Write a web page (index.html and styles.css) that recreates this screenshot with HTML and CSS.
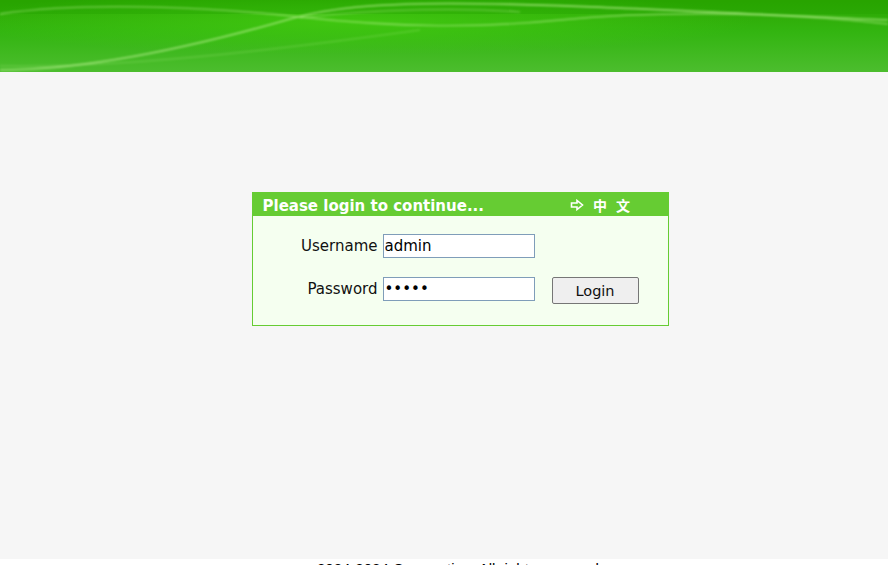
FILE: index.html
```html
<!DOCTYPE html>
<html lang="en">

<head>
    <meta charset="UTF-8">
    <meta name="viewport" content="width=device-width, initial-scale=1.0">
    <title>Login</title>
    <link rel="stylesheet" href="styles.css">
</head>

<body>
    <div class="banner">
        <svg class="waves" viewBox="0 0 888 72" preserveAspectRatio="none">
            <defs>
                <linearGradient id="sky" x1="0" y1="0" x2="0" y2="1">
                    <stop offset="0" stop-color="#2ba600" />
                    <stop offset="0.45" stop-color="#33b511" />
                    <stop offset="1" stop-color="#4cbd2e" />
                </linearGradient>
                <radialGradient id="glow" cx="0.4" cy="0.3" r="0.45">
                    <stop offset="0" stop-color="#44cc11" stop-opacity="0.8" />
                    <stop offset="1" stop-color="#44cc11" stop-opacity="0" />
                </radialGradient>
                <filter id="soft"><feGaussianBlur stdDeviation="0.8" /></filter>
            </defs>
            <rect width="888" height="72" fill="url(#sky)" />
            <rect width="888" height="72" fill="url(#glow)" />
            <rect x="0" y="0" width="888" height="14" fill="#22a000" opacity="0.35" />
            <g fill="none" stroke="#b8f090" filter="url(#soft)">
                <path d="M0 70 C 90 70, 200 45, 290 19 S 520 4, 888 20" stroke-width="1.6" opacity="0.7" />
                <path d="M0 14 C 80 2, 200 6, 300 17 S 480 28, 560 20 S 760 10, 888 24" stroke-width="1.4" opacity="0.55" />
                <path d="M300 18 C 380 8, 470 8, 520 12" stroke-width="1.2" opacity="0.5" />
                <path d="M0 66 C 120 68, 260 52, 420 30" stroke-width="1" opacity="0.35" />
            </g>
        </svg>
    </div>

    <div class="page">
        <div class="login-box">
            <div class="login-title">
                <span>Please login to continue...</span>
                <span class="lang">
                    <svg class="arrow" viewBox="0 0 14 12">
                        <path d="M1.5 4 H7 V1.5 L12.5 6 L7 10.5 V8 H1.5 Z" fill="none" stroke="#fff" stroke-width="1.6" stroke-linejoin="miter" />
                    </svg>
                    <span class="zh">中</span>
                    <span class="zh">文</span>
                </span>
            </div>
            <form class="login-form">
                <div class="row">
                    <label for="user">Username</label>
                    <input id="user" type="text" value="admin">
                </div>
                <div class="row">
                    <label for="pass">Password</label>
                    <input id="pass" type="password" value="admin">
                    <button type="button" class="login-btn">Login</button>
                </div>
            </form>
        </div>
    </div>

    <div class="footer">2024-2024 Corporation. All rights reserved.</div>
</body>

</html>
```
FILE: styles.css
```css
body {
    margin: 0;
    background-color: #fff;
    font-family: "DejaVu Sans", Verdana, sans-serif;
}

.banner {
    height: 72px;
    overflow: hidden;
}

.waves {
    display: block;
    width: 100%;
    height: 72px;
}

.page {
    height: 487px;
    background-color: #f6f6f6;
    padding-left: 32px;
    display: flex;
    justify-content: center;
    align-items: flex-start;
}

.login-box {
    margin-top: 120px;
    width: 415px;
    height: 132px;
    border: 1px solid #66cc33;
    background-color: #f5fff0;
}

.login-title {
    box-sizing: border-box;
    height: 23px;
    padding-top: 3px;
    background-color: #66cc33;
    color: #fff;
    font-weight: bold;
    font-size: 15px;
    display: flex;
    align-items: center;
    padding-left: 10px;
}

.lang {
    margin-left: 86px;
    margin-top: -3px;
    display: flex;
    align-items: center;
    gap: 9px;
}

.arrow {
    width: 14px;
    height: 12px;
}

.zh {
    font-family: "Noto Sans CJK SC", sans-serif;
    font-weight: bold;
    font-size: 14px;
    line-height: 16px;
}

.login-form {
    margin: 0;
    padding-top: 18px;
}

.row {
    display: flex;
    align-items: baseline;
    height: 24px;
    margin-bottom: 19px;
}

.row label {
    width: 125px;
    text-align: right;
    font-size: 15px;
    color: #111;
    margin-right: 5px;
}

.row input {
    box-sizing: border-box;
    width: 152px;
    height: 24px;
    border: 1px solid #7f9db9;
    padding: 0 1px;
    font-family: "DejaVu Sans", Verdana, sans-serif;
    font-size: 15px;
    color: #000;
    background-color: #fff;
}

.login-btn {
    box-sizing: border-box;
    margin-left: 17px;
    align-self: flex-start;
    width: 87px;
    height: 27px;
    border: 1px solid #767676;
    border-radius: 2px;
    background-color: #efefef;
    font-family: "DejaVu Sans", Verdana, sans-serif;
    font-size: 14.5px;
    color: #111;
}

.footer {
    padding-left: 32px;
    text-align: center;
    font-family: "Liberation Sans", Arial, sans-serif;
    font-size: 15px;
    padding-top: 1px;
}
```
